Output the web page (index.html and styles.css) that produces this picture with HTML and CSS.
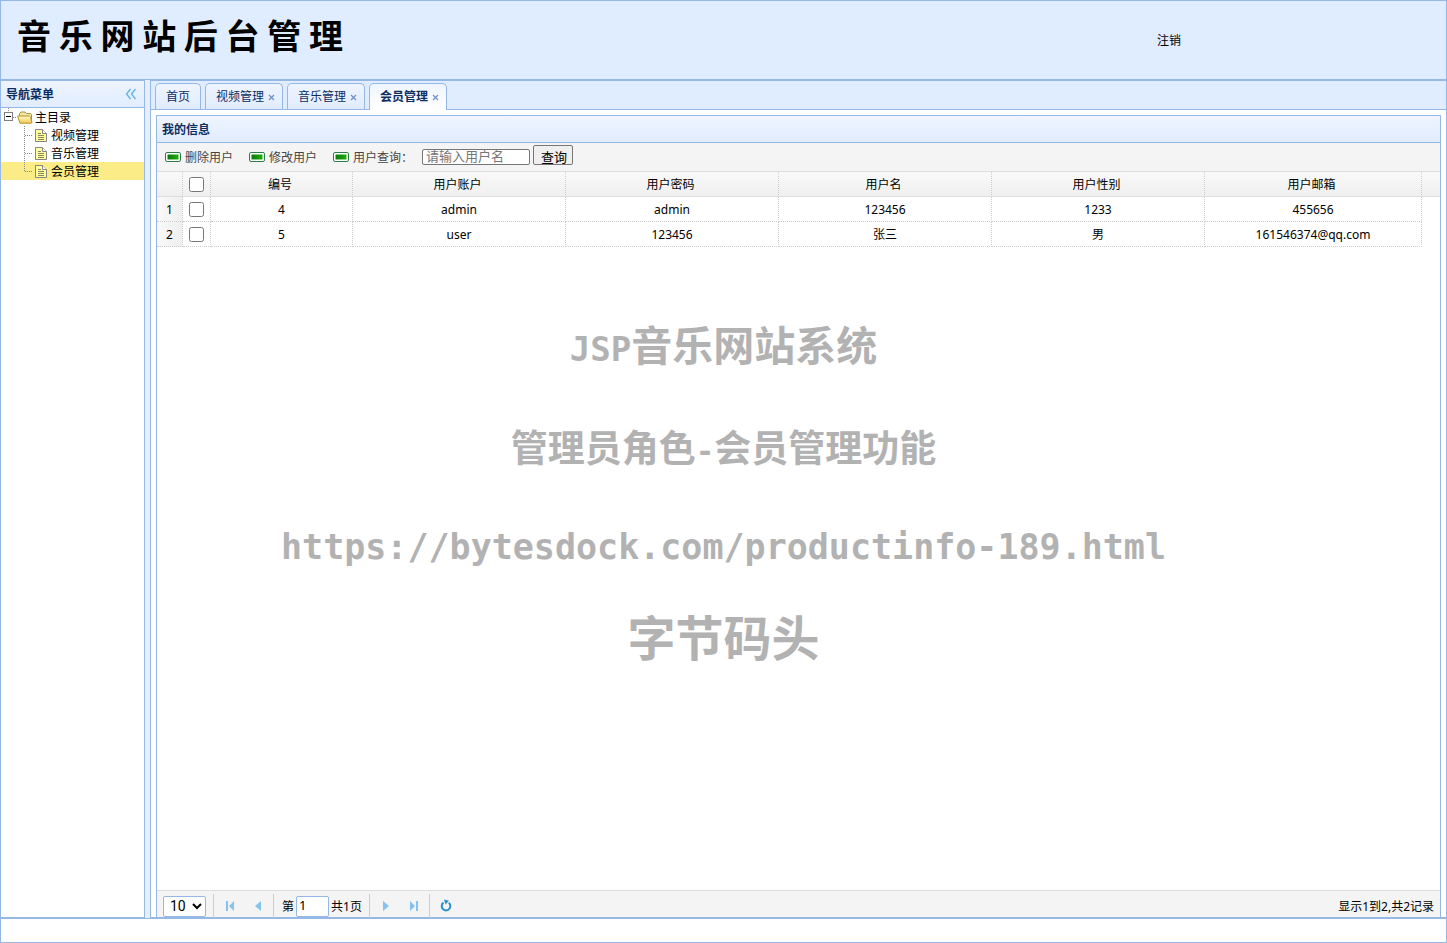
FILE: index.html
```html
<!DOCTYPE html>
<html lang="zh-CN">
<head>
<meta charset="utf-8">
<title>音乐网站后台管理</title>
<link rel="stylesheet" href="styles.css">
</head>
<body>
<svg width="0" height="0" class="defs" aria-hidden="true">
  <defs>
    <linearGradient id="green" x1="0" x2="1"><stop offset="0" stop-color="#0a7a0a"/><stop offset="1" stop-color="#1fae10"/></linearGradient>
    <linearGradient id="gold" x1="0" y1="0" x2="0" y2="1"><stop offset="0" stop-color="#fffbd0"/><stop offset="1" stop-color="#f2c94e"/></linearGradient>
    <symbol id="bar" viewBox="0 0 16 16"><rect x=".5" y="3.500" width="15" height="9" rx="1.500" fill="#fff" stroke="#2f7d46"/><rect x="2.500" y="5.500" width="11" height="5" fill="url(#green)"/></symbol>
    <symbol id="doc" viewBox="0 0 16 18"><path d="M2.500 3.500h7l4 4v8h-11z" fill="#ffffa0" stroke="#858585"/><path d="M9.500 3.500v4h4" fill="#fff" stroke="#858585"/><path d="M5 7.500h3M5 9.500h6M5 11.500h6M5 13.500h6" stroke="#8a8a58"/></symbol>
    <symbol id="folder" viewBox="0 0 16 18"><path d="M2.500 13.500V5.500l1.500-1.500h4l1.500 1.500h4l1 1v8z" fill="#f3e6a0" stroke="#a8913c"/><path d="M.6 8h11.600l1.300 1.200 1.500 5.300-.8.700H3z" fill="url(#gold)" stroke="#b8902a"/></symbol>
  </defs>
</svg>
<div class="layout">
  <header class="north">
    <h1 class="brand">音 乐 网 站 后 台 管 理</h1>
    <a class="logout" href="#">注销</a>
  </header>
  <div class="middle">
    <nav class="west">
      <div class="panel-head"><h2>导航菜单</h2>
        <button class="collapse" aria-label="折叠"><svg width="12" height="12" viewBox="0 0 12 12"><path d="M6.500 1L2.500 6l4 5M11.500 1L7.500 6l4 5" fill="none" stroke="#5fb0e8" stroke-width="1.300"/></svg></button>
      </div>
      <ul class="tree">
        <li class="node">
          <svg width="16" height="18" viewBox="0 0 16 18"><path d="M7.500 0v5M12 9.500h4" stroke="#888" stroke-dasharray="1 1"/><rect x="3.500" y="4.500" width="8" height="8" fill="#fff" stroke="#808080"/><path d="M5 8.500h5" stroke="#000"/></svg>
          <svg width="16" height="18"><use href="#folder"/></svg><span>主目录</span>
        </li>
        <li class="node leaf"><svg width="16" height="18"><path d="M7.500 0v18M8 9.500h8" stroke="#888" stroke-dasharray="1 1"/></svg><svg width="16" height="18"><use href="#doc"/></svg><span>视频管理</span></li>
        <li class="node leaf"><svg width="16" height="18"><path d="M7.500 0v18M8 9.500h8" stroke="#888" stroke-dasharray="1 1"/></svg><svg width="16" height="18"><use href="#doc"/></svg><span>音乐管理</span></li>
        <li class="node leaf selected"><svg width="16" height="18"><path d="M7.500 0v10M8 9.500h8" stroke="#888" stroke-dasharray="1 1"/></svg><svg width="16" height="18"><use href="#doc"/></svg><span>会员管理</span></li>
      </ul>
    </nav>
    <main class="center">
      <div class="tabs">
        <div class="tab"><button>首页</button></div>
        <div class="tab"><button>视频管理</button><button class="close" aria-label="关闭视频管理"><svg width="8" height="8"><path d="M1 2l5 5M6 2L1 7"/></svg></button></div>
        <div class="tab"><button>音乐管理</button><button class="close" aria-label="关闭音乐管理"><svg width="8" height="8"><path d="M1 2l5 5M6 2L1 7"/></svg></button></div>
        <div class="tab active"><button>会员管理</button><button class="close" aria-label="关闭会员管理"><svg width="8" height="8"><path d="M1 2l5 5M6 2L1 7"/></svg></button></div>
      </div>
      <div class="content">
        <section class="panel">
          <div class="panel-head"><h2>我的信息</h2></div>
          <div class="toolbar">
            <button class="tool"><svg width="16" height="16"><use href="#bar"/></svg><span>删除用户</span></button>
            <button class="tool"><svg width="16" height="16"><use href="#bar"/></svg><span>修改用户</span></button>
            <label class="tool" for="user"><svg width="16" height="16"><use href="#bar"/></svg><span>用户查询：</span></label>
            <input class="query" id="user" type="text" placeholder="请输入用户名">
            <button class="search">查询</button>
          </div>
          <div class="grid">
            <table>
              <colgroup><col class="c-num"><col class="c-check"><col class="c-id"><col><col><col><col><col class="c-mail"><col class="c-fill"></colgroup>
              <thead><tr><th></th><th class="check"><input type="checkbox" aria-label="全选"></th><th>编号</th><th>用户账户</th><th>用户密码</th><th>用户名</th><th>用户性别</th><th>用户邮箱</th><th class="fill"></th></tr></thead>
              <tbody>
                <tr><td class="num">1</td><td class="check"><input type="checkbox" aria-label="选择第1行"></td><td>4</td><td>admin</td><td>admin</td><td>123456</td><td>1233</td><td>455656</td><td class="fill"></td></tr>
                <tr><td class="num">2</td><td class="check"><input type="checkbox" aria-label="选择第2行"></td><td>5</td><td>user</td><td>123456</td><td>张三</td><td>男</td><td>161546374@qq.com</td><td class="fill"></td></tr>
              </tbody>
            </table>
          </div>
          <div class="pager">
            <select aria-label="每页条数"><option>10</option></select>
            <span class="sep"></span>
            <button aria-label="首页"><svg width="16" height="16"><path d="M4 3h2v10H4zM12 3v10L7 8z"/></svg></button>
            <button aria-label="上一页"><svg width="16" height="16"><path d="M11 3v10L5 8z"/></svg></button>
            <span class="sep"></span>
            <label for="page">第</label><input id="page" type="text" value="1"><span class="total">共1页</span>
            <span class="sep"></span>
            <button aria-label="下一页"><svg width="16" height="16"><path d="M5 3v10l6-5z"/></svg></button>
            <button aria-label="末页"><svg width="16" height="16"><path d="M4 3v10l5-5zM10 3h2v10h-2z"/></svg></button>
            <span class="sep"></span>
            <button aria-label="刷新"><svg width="16" height="16"><path class="reload" d="M5.500 4.600A4.300 4.300 0 1 0 10.800 4.800"/><path class="tip" d="M6 1.500l5 1.300L7.500 6.500z"/></svg></button>
            <span class="info">显示1到2,共2记录</span>
          </div>
        </section>
      </div>
    </main>
  </div>
  <footer class="south"></footer>
</div>
<div class="watermark">
  <p class="w1"><span>JSP</span>音乐网站系统</p>
  <p class="w2">管理员角色<span>-</span>会员管理功能</p>
  <p class="w3">https://bytesdock.com/productinfo-189.html</p>
  <p class="w4">字节码头</p>
</div>
</body>
</html>
```
FILE: styles.css
```css
* { box-sizing: border-box; }
body {
  margin: 0;
  color: #000;
  font: 12px/18px "Noto Sans", "Noto Sans CJK SC", sans-serif;
}
h1, h2, p, ul { margin: 0; padding: 0; }
button, input, select { font: inherit; color: inherit; margin: 0; }
button { border: 0; padding: 0; background: none; }
svg { display: block; flex: none; }
.defs { position: absolute; }

.layout { display: grid; grid-template-rows: 80px 1fr 25px; height: 100vh; }
.north {
  display: flex;
  align-items: center;
  border: 1px solid #95b8e7;
  background: #e0ecff;
}
.brand {
  flex: 0 0 80%;
  padding: 0 0 10px 16px;
  font: bold 34px/50px "Noto Sans CJK SC", sans-serif;
}
.logout { padding-top: 2px; color: #000; text-decoration: none; }
.middle {
  display: grid;
  grid-template-columns: 145px 1fr;
  gap: 5px;
  min-height: 0;
  background: #e6eef8;
}
.west, .center { border: 1px solid #95b8e7; background: #fff; min-width: 0; min-height: 0; }
.south { border: 1px solid #95b8e7; background: #fff; }

.panel-head {
  display: flex;
  align-items: center;
  justify-content: space-between;
  height: 27px;
  padding: 0 8px 0 5px;
  border-bottom: 1px solid #95b8e7;
  background: linear-gradient(#eff5ff, #e0ecff);
  color: #0e2d5f;
}
.panel-head h2 { padding-top: 2px; font-size: 12px; line-height: 18px; }

.tree { list-style: none; }
.node { display: flex; height: 18px; line-height: 20px; white-space: nowrap; }
.node span { padding-left: 2px; }
.leaf { padding-left: 16px; }
.selected { background: #fbec88; }

.center { display: flex; flex-direction: column; }
.tabs {
  display: flex;
  gap: 4px;
  height: 29px;
  padding: 2px 4px 0;
  border-bottom: 1px solid #95b8e7;
  background: #e0ecff;
}
.tab {
  display: flex;
  align-items: center;
  gap: 4px;
  height: 26px;
  padding: 0 6px 0 10px;
  border: 1px solid #95b8e7;
  border-bottom: 0;
  border-radius: 5px 5px 0 0;
  background: linear-gradient(#eff5ff, #e0ecff);
  color: #0e2d5f;
}
.tab:first-child { padding-right: 10px; }
.tab.active { height: 27px; background: linear-gradient(#eff5ff, #fff); font-weight: bold; }
.close svg { fill: none; stroke: #6f8fc4; stroke-width: 1.2; }

.content { flex: 1; display: flex; min-height: 0; padding: 5px 5px 0; }
.panel {
  flex: 1;
  display: flex;
  flex-direction: column;
  min-width: 0;
  border: 1px solid #95b8e7;
  border-bottom: 0;
}
.toolbar {
  display: flex;
  align-items: center;
  height: 29px;
  padding: 0 8px;
  border-bottom: 1px solid #ddd;
  background: #f4f4f4;
}
.tool { display: flex; align-items: center; gap: 4px; margin-right: 16px; color: #444; }
.tool span { padding-top: 2px; }
label.tool { margin-right: 9px; }
.query {
  width: 108px;
  height: 16px;
  padding: 0 3px 2px;
  border: 1px solid #767676;
  border-radius: 2px;
  background: #fff;
  font-size: 13px;
}
.query::placeholder { color: #757575; }
.search {
  width: 40px;
  height: 20px;
  margin: 0 0 4px 3px;
  padding: 2px 0 0 2px;
  border: 1px solid #767676;
  border-radius: 2px;
  background: #efefef;
  font-size: 13px;
}

.grid { flex: 1; min-height: 0; }
table { width: 100%; table-layout: fixed; border-collapse: separate; border-spacing: 0; }
.c-num { width: 26px; }
.c-check { width: 28px; }
.c-id { width: 142px; }
.c-mail { width: 217px; }
.c-fill { width: 18px; }
th, td {
  height: 25px;
  padding: 2px 0 0;
  border-right: 1px dotted #ccc;
  border-bottom: 1px dotted #ccc;
  font-weight: normal;
  text-align: center;
}
thead tr { background: linear-gradient(#f9f9f9, #efefef); }
th { padding-right: 3px; border-bottom: 1px solid #ddd; }
.num { background: linear-gradient(90deg, #f9f9f9, #efefef); }
.fill { border-right: 0; }
td.fill { border-bottom: 0; }
.check { padding: 0; }
.check input { display: block; width: 15px; height: 15px; margin: 0 auto; }

.pager {
  display: flex;
  align-items: center;
  height: 27px;
  padding: 4px 6px 0;
  border-top: 1px solid #ddd;
  background: #f4f4f4;
}
.pager select {
  width: 43px;
  height: 21px;
  padding: 0 0 0 2px;
  border: 1px solid #95b8e7;
  border-radius: 2px;
  background: #fff;
  font-family: Roboto, sans-serif;
  font-size: 14px;
}
.pager input {
  width: 33px;
  height: 21px;
  margin: 0 2px;
  padding: 0 2px 2px;
  border: 1px solid #95b8e7;
  border-radius: 2px;
  background: #fff;
  font-size: 13px;
}
.pager button { padding: 0 6px; }
.pager button svg { fill: #84c3f0; }
.pager button .reload { fill: none; stroke: #2c8fd0; stroke-width: 2; }
.pager button .tip { fill: #2c8fd0; }
.sep { width: 1px; height: 24px; margin: 0 2px 0 7px; background: #ccc; }
button + .sep { margin-left: 1px; }
.pager label, .total, .info { padding-top: 2px; }
.sep + label { margin-left: 6px; }
.info { margin-left: auto; }

.watermark {
  position: absolute;
  top: 313px;
  left: 0;
  right: 0;
  color: #b2b2b2;
  font-family: "Noto Sans CJK SC", sans-serif;
  font-weight: bold;
  text-align: center;
  pointer-events: none;
}
.watermark p { line-height: 60px; }
.watermark .w1 { font-size: 41px; }
.w1 span { font-family: "DejaVu Sans Mono", monospace; font-size: 34px; }
.watermark .w2 { margin-top: 37px; font-size: 37px; }
.w2 span { font-family: "DejaVu Sans Mono", monospace; font-size: 31px; }
.watermark .w3 { margin-top: 36px; font-family: "DejaVu Sans Mono", monospace; font-size: 35px; }
.watermark .w4 { margin-top: 28px; font-size: 48px; }
```
